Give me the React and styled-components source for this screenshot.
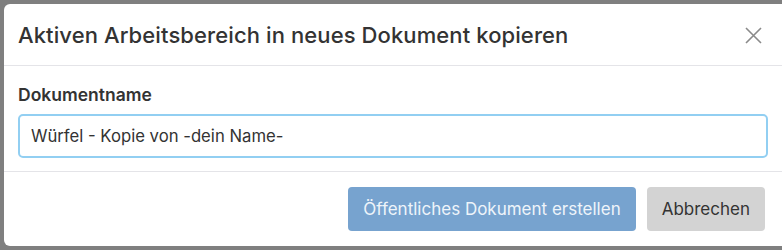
import React from "react";
import styled, { createGlobalStyle } from "styled-components";

const Global = createGlobalStyle`
  html, body {
    margin: 0;
    padding: 0;
    background: #7f7f7f;
    font-family: Inter, "Noto Sans", "Liberation Sans", sans-serif;
  }
`;

function App() {
  return (
    <Page>
      <Global />
      <Modal>
        <Header>
          <Title>Aktiven Arbeitsbereich in neues Dokument kopieren</Title>
          <Close aria-label="Schließen">
            <svg width="17" height="17" viewBox="0 0 17 17">
              <path d="M1 1 L16 16 M16 1 L1 16" stroke="#8a8a8a" strokeWidth="1.6" />
            </svg>
          </Close>
        </Header>
        <Body>
          <Label>Dokumentname</Label>
          <Input defaultValue="Würfel - Kopie von -dein Name-" />
        </Body>
        <Footer>
          <Button $primary>Öffentliches Dokument erstellen</Button>
          <Button>Abbrechen</Button>
        </Footer>
      </Modal>
    </Page>
  );
}

export default App;

const Page = styled.div`
  width: 782px;
  height: 250px;
  padding: 4px 0 0 4px;
  box-sizing: border-box;
  overflow: hidden;
`;

const Modal = styled.div`
  width: 784px;
  height: 242px;
  background: #fff;
  border-radius: 6px;
  display: flex;
  flex-direction: column;
`;

const Header = styled.div`
  height: 62px;
  border-bottom: 1px solid #e4e4e8;
  display: flex;
  align-items: center;
  justify-content: space-between;
  padding: 1px 20px 0 14px;
  box-sizing: border-box;
  width: 778px;
`;

const Title = styled.h1`
  margin: 0;
  font-size: 22px;
  font-weight: 500;
  color: #333;
  letter-spacing: 0.1px;
`;

const Close = styled.div`
  display: flex;
  align-items: center;
`;

const Body = styled.div`
  width: 778px;
  box-sizing: border-box;
  padding: 18px 14px 13px;
  border-bottom: 1px solid #e4e4e8;
  display: flex;
  flex-direction: column;
  gap: 9px;
`;

const Label = styled.label`
  font-size: 17.5px;
  font-weight: 600;
  color: #333;
  line-height: 21px;
`;

const Input = styled.input`
  width: 750px;
  height: 44px;
  box-sizing: border-box;
  border: 2px solid #92cff2;
  border-radius: 5px;
  padding: 0 11px;
  font-family: inherit;
  font-size: 16.7px;
  color: #333;
  outline: none;
`;

const Footer = styled.div`
  width: 778px;
  box-sizing: border-box;
  flex: 1;
  display: flex;
  justify-content: flex-end;
  align-items: center;
  gap: 11px;
  padding: 0 17px 0 0;
`;

const Button = styled.button`
  height: 44px;
  border: none;
  border-radius: 4px;
  padding: 0 15px;
  font-family: inherit;
  font-size: 17px;
  background: ${(p) => (p.$primary ? "#77a3cf" : "#d3d3d3")};
  color: ${(p) => (p.$primary ? "#eef4fa" : "#333")};
`;
